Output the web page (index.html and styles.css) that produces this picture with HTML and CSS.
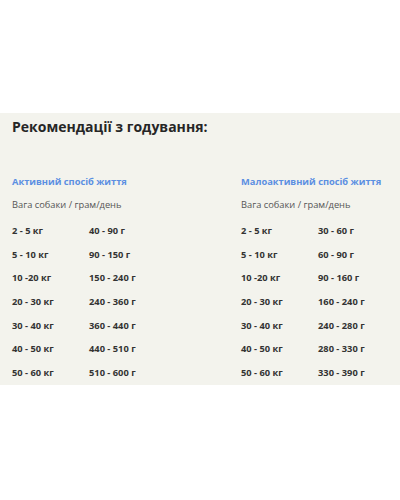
FILE: index.html
```html
<!DOCTYPE html>
<html lang="uk">
<head>
<meta charset="utf-8">
<link rel="stylesheet" href="styles.css">
</head>
<body>
<section class="panel">
  <h2 class="title">Рекомендації з годування:</h2>
  <div class="tables">
    <div class="block">
      <h3 class="block-title">Активний спосіб життя</h3>
      <p class="caption">Вага собаки / грам/день</p>
      <div class="rows">
        <span>2 - 5 кг</span><span>40 - 90 г</span>
        <span>5 - 10 кг</span><span>90 - 150 г</span>
        <span>10 -20 кг</span><span>150 - 240 г</span>
        <span>20 - 30 кг</span><span>240 - 360 г</span>
        <span>30 - 40 кг</span><span>360 - 440 г</span>
        <span>40 - 50 кг</span><span>440 - 510 г</span>
        <span>50 - 60 кг</span><span>510 - 600 г</span>
      </div>
    </div>
    <div class="block">
      <h3 class="block-title">Малоактивний спосіб життя</h3>
      <p class="caption">Вага собаки / грам/день</p>
      <div class="rows">
        <span>2 - 5 кг</span><span>30 - 60 г</span>
        <span>5 - 10 кг</span><span>60 - 90 г</span>
        <span>10 -20 кг</span><span>90 - 160 г</span>
        <span>20 - 30 кг</span><span>160 - 240 г</span>
        <span>30 - 40 кг</span><span>240 - 280 г</span>
        <span>40 - 50 кг</span><span>280 - 330 г</span>
        <span>50 - 60 кг</span><span>330 - 390 г</span>
      </div>
    </div>
  </div>
</section>
</body>
</html>
```
FILE: styles.css
```css
html, body {
  margin: 0;
  padding: 0;
  background: #ffffff;
}
body {
  font-family: "Open Sans", "Noto Sans", sans-serif;
  color: #333333;
  overflow: hidden;
}
.panel {
  margin-top: 113px;
  background: #f3f3ed;
  padding: 4px 0 0 12px;
  height: 268px;
  overflow: hidden;
}
.title {
  margin: 0;
  font-size: 14px;
  line-height: 20px;
  font-weight: 700;
  color: #262626;
}
.tables {
  display: grid;
  grid-template-columns: 229px 229px;
  margin-top: 38px;
}
.block-title {
  margin: 0;
  font-size: 9.3px;
  line-height: 14px;
  font-weight: 700;
  color: #5b8fe2;
}
.caption {
  margin: 9px 0 0;
  font-size: 9.3px;
  line-height: 14px;
  color: #555555;
}
.rows {
  display: grid;
  grid-template-columns: 77px auto;
  grid-auto-rows: 23.6px;
  align-items: center;
  margin-top: 7px;
  font-size: 9.3px;
  font-weight: 700;
  color: #333333;
}
```
